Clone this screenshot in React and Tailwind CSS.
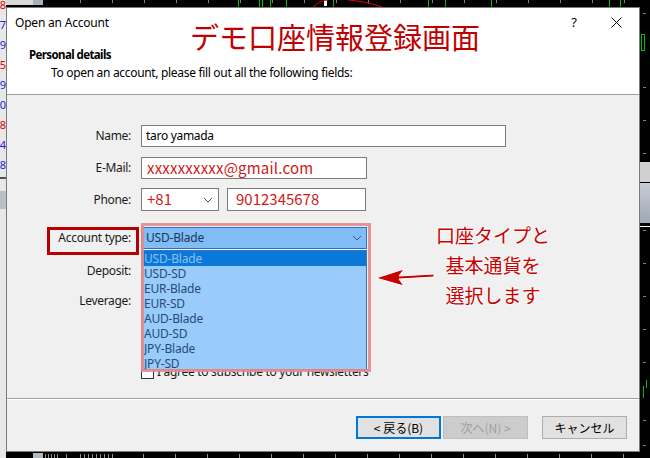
import React from "react";

const ui = "font-['Noto_Sans','Noto_Sans_CJK_JP',sans-serif]";
const jp = "font-['Noto_Sans_CJK_JP','Noto_Sans',sans-serif]";

function Chevron({ className = "" }) {
  return (
    <svg width="10" height="6" viewBox="0 0 10 6" className={className}>
      <path d="M1 1 L5 5 L9 1" fill="none" stroke="currentColor" strokeWidth="1" />
    </svg>
  );
}

function Row({ label, className = "", children }) {
  return (
    <div className={`flex items-center h-[22px] ${className}`}>
      <div className="w-[125px] text-right pr-[1px] text-[12px] tracking-[-0.3px] text-[#1a1a1a] leading-none">{label}</div>
      <div className="ml-[9px] flex items-center h-full gap-[8px]">{children}</div>
    </div>
  );
}

const items = ["USD-Blade", "USD-SD", "EUR-Blade", "EUR-SD", "AUD-Blade", "AUD-SD", "JPY-Blade", "JPY-SD"];

export default function App() {
  return (
    <div className={`relative w-[650px] h-[458px] bg-black overflow-hidden ${ui}`}>
      {/* top chart strip */}
      <div className="absolute left-0 top-0 w-[33px] h-[5px] bg-[#d8d8d8]" />
      <div className="absolute left-[33px] top-0 w-[10px] h-[5px] bg-[#a8b0b8]" />
      {[80, 112, 144, 176, 208, 240, 272, 304, 336, 368, 400, 432, 464, 496, 528, 560, 592, 624].map((x) => (
        <div key={x} className="absolute top-0 w-[1px] h-[3px] bg-[#808080]" style={{ left: x }} />
      ))}
      {[238, 259, 262, 270, 286, 333, 428, 445, 491, 609, 620].map((x) => (
        <div key={x} className="absolute top-0 w-[1px] h-[7px] bg-[#00c000]" style={{ left: x }} />
      ))}
      <div className="absolute left-[324px] top-0 w-[3px] h-[6px] bg-white" />
      <svg className="absolute left-[310px] top-0" width="80" height="8">
        <path d="M2 8 Q10 0 18 0" stroke="#e00000" fill="none" />
        <path d="M38 0 Q55 1 75 8" stroke="#e00000" fill="none" />
      </svg>

      {/* left panel strip */}
      <div className="absolute left-0 top-0 w-[6px] h-[458px] bg-[#e8e8e8] overflow-hidden">
        <div className="flex flex-col items-end text-[11px] leading-[20px] -mt-[5px]">
          <span className="text-[#e00000]">8</span>
          <span className="text-[#2020e0]">7</span>
          <span className="text-[#2020e0]">9</span>
          <span className="text-[#e00000]">5</span>
          <span className="text-[#2020e0]">9</span>
          <span className="text-[#2020e0]">0</span>
          <span className="text-[#e00000]">8</span>
          <span className="text-[#2020e0]">4</span>
          <span className="text-[#2020e0]">8</span>
        </div>
        <div className="mt-[2px] h-[2px] bg-[#505050]" />
        <div className="mt-[12px] h-[18px] bg-[#b8c0c8]" />
      </div>

      {/* right chart strip */}
      {[13, 87, 120, 153, 230, 263, 296, 329, 362, 420, 445].map((y) => (
        <div key={y} className="absolute left-[643px] h-[1px] w-[3px] bg-[#808080]" style={{ top: y }} />
      ))}
      <div className="absolute left-[641px] top-[34px] w-[4px] h-[17px] border border-[#00c000]" />
      <div className="absolute left-[640px] top-[162px] w-[10px] h-[20px] bg-[#d0d0d0]" />
      <div className="absolute left-[640px] top-[183px] w-[10px] h-[40px] bg-gradient-to-b from-[#c8ccd4] to-[#a0a8b4]" />
      <div className="absolute left-[640px] top-[226px] w-[10px] h-[1px] bg-white" />
      <div className="absolute left-[643px] top-[386px] w-[1px] h-[12px] bg-[#00c000]" />
      <div className="absolute left-[646px] top-[380px] w-[1px] h-[8px] bg-[#00c000]" />

      {/* bottom strip */}
      <div className="absolute left-[33px] top-[453px] w-[10px] h-[5px] bg-[#b0b8c0]" />
      {[45, 48, 51, 54, 57, 66, 80, 84, 88, 92, 96, 100, 104, 108, 112, 143, 175, 207, 239, 271, 303, 335, 367, 399, 431, 463, 495, 527, 559, 591, 623].map((x) => (
        <div key={x} className="absolute top-[454px] w-[1px] h-[4px] bg-[#909090]" style={{ left: x }} />
      ))}

      {/* dialog */}
      <div className="absolute left-[6px] top-[7px] w-[634px] h-[445px] border border-[#7a7a7a] bg-[#f0f0f0] flex flex-col">
        {/* header */}
        <div className="bg-white h-[87px] border-b border-[#a0a0a0] flex flex-col">
          <div className="h-[29px] flex items-center pl-[8px] relative">
            <span className="text-[12px] tracking-[-0.2px] text-black">Open an Account</span>
            <div className="ml-auto flex items-center">
              <span className="text-[13px] text-black mr-[34px]">?</span>
              <svg width="11" height="11" viewBox="0 0 11 11" className="mr-[17px]">
                <path d="M0.5 0.5 L10.5 10.5 M10.5 0.5 L0.5 10.5" stroke="#000" strokeWidth="1" />
              </svg>
            </div>
          </div>
          <div className="pl-[22px] mt-[10px] text-[11.5px] tracking-[-0.6px] font-bold text-black leading-[16px]">Personal details</div>
          <div className="pl-[44px] mt-[2px] text-[12px] tracking-[-0.32px] text-black leading-[16px]">
            To open an account, please fill out all the following fields:
          </div>
        </div>

        {/* form */}
        <div className="flex-1 flex flex-col pt-[30px]">
          <Row label="Name:">
            <div className="w-[365px] h-[22px] bg-white border border-[#7a7a7a] flex items-center pl-[4px] text-[12px] tracking-[-0.3px] text-black">
              taro yamada
            </div>
          </Row>
          <Row label="E-Mail:" className="mt-[10px]">
            <div className={`w-[226px] h-[22px] bg-white border border-[#7a7a7a] flex items-center pl-[5px] text-[15px] tracking-[0.2px] text-[#d01818] ${jp}`}>
              xxxxxxxxxx@gmail.com
            </div>
          </Row>
          <Row label="Phone:" className="mt-[9px] h-[23px]">
            <div className={`w-[78px] h-[23px] bg-white border border-[#7a7a7a] flex items-center pl-[5px] pr-[5px] text-[15px] text-[#d01818] ${jp}`}>
              +81
              <Chevron className="ml-auto text-[#555]" />
            </div>
            <div className={`w-[139px] h-[23px] bg-white border border-[#7a7a7a] flex items-center pl-[8px] text-[15px] text-[#d01818] ${jp}`}>
              9012345678
            </div>
          </Row>
          <Row label="Account type:" className="mt-[16px]">
            <div className="w-[226px] h-[22px] bg-[#80bdf6] border border-[#2f6fc0] flex items-center pl-[4px] pr-[4px] text-[12px] tracking-[-0.2px] text-[#1c3558]">
              USD-Blade
              <Chevron className="ml-auto text-[#3a5a80]" />
            </div>
          </Row>
          <Row label="Deposit:" className="mt-[11px]">
            <div className="w-[226px] h-[22px] bg-white border border-[#7a7a7a]" />
          </Row>
          <Row label="Leverage:" className="mt-[8px]">
            <div className="w-[226px] h-[22px] bg-white border border-[#7a7a7a]" />
          </Row>
          <div className="flex items-center mt-[52px] pl-[134px] h-[16px]">
            <div className="w-[13px] h-[13px] bg-white border border-[#333]" />
            <span className="ml-[3px] text-[12px] tracking-[-0.3px] text-[#1a1a1a]">I agree to subscribe to your newsletters</span>
          </div>
        </div>

        {/* footer */}
        <div className="h-[53px] border-t border-[#a0a0a0] flex flex-col">
          <div className="h-[1px] bg-white" />
          <div className="flex items-center justify-end pr-[12px] pt-[16px]">
            <button className={`w-[85px] h-[23px] bg-[#e1e1e1] border-2 border-[#0078d7] text-[12px] text-black ${jp}`}>
              &lt; 戻る(B)
            </button>
            <button className={`ml-[2px] w-[85px] h-[23px] bg-[#cccccc] border border-[#bfbfbf] text-[12px] text-[#a0a0a0] ${jp}`}>
              次へ(N) &gt;
            </button>
            <button className={`ml-[14px] w-[85px] h-[23px] bg-[#e1e1e1] border border-[#adadad] text-[12px] text-black ${jp}`}>
              キャンセル
            </button>
          </div>
        </div>
      </div>

      {/* big red title */}
      <div className={`absolute left-[190px] top-[18px] text-[29px] leading-[36px] text-[#c00000] ${jp}`}>
        デモ口座情報登録画面
      </div>

      {/* account type label box */}
      <div className="absolute left-[47px] top-[227px] w-[92px] h-[28px] border-[3px] border-[#b40000]" />

      {/* dropdown list */}
      <div className="absolute left-[141px] top-[250px] w-[226px] h-[120px] bg-[#99cbfb] border border-[#3a72c0] flex flex-col">
        {items.map((it, i) => (
          <div
            key={it}
            className={`h-[15px] leading-[15px] pl-[2px] text-[12px] tracking-[-0.2px] ${i === 0 ? "bg-[#0a78d8] text-[#8cc2f2]" : "text-[#2a4a78]"}`}
          >
            {it}
          </div>
        ))}
      </div>

      {/* pink highlight */}
      <div className="absolute left-[141px] top-[223px] w-[230px] h-[149px] border-[3px] border-[#e88a8a]/90" />

      {/* annotation */}
      <div
        className={`absolute left-[420px] top-[220px] w-[146px] flex flex-col items-center text-[19px] leading-[30px] text-[#c80000] ${jp} [text-shadow:0_0_2px_#fff,0_0_2px_#fff,0_0_3px_#fff]`}
      >
        <span>口座タイプと</span>
        <span>基本通貨を</span>
        <span>選択します</span>
      </div>
      <svg className="absolute left-[372px] top-[266px]" width="66" height="24" viewBox="0 0 66 24">
        <path d="M4 12 L32 3 L27 10 L62 8 L62 11 L27 13 L32 20 Z" fill="#c80000" stroke="#fff" strokeWidth="1" strokeLinejoin="round" />
      </svg>
    </div>
  );
}
